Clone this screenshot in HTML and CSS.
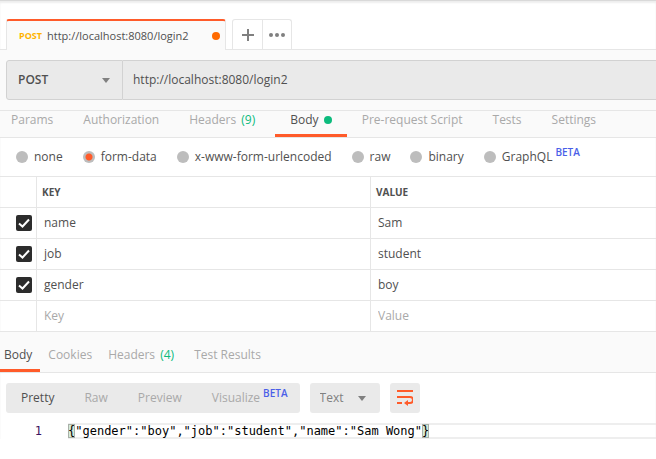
FILE: index.html
```
<!DOCTYPE html>
<html lang="en">
  <head>
    <meta charset="utf-8">
    <meta name="viewport" content="width=device-width, initial-scale=1.0">
    <title>POST login2</title>
    <link rel="stylesheet" href="styles.css">
  </head>
  <body>

    <!-- Open request tabs -->
    <header class="tab-strip">
      <button class="request-tab" type="button">
        <span class="method">POST</span>
        <span class="tab-title">http://localhost:8080/login2</span>
        <span class="unsaved"></span>
      </button>
      <div class="tab-actions">
        <button type="button" aria-label="New tab">
          <svg width="12" height="12" viewBox="0 0 12 12"><path d="M6 0v12M0 6h12" stroke="#808080" stroke-width="2"/></svg>
        </button>
        <button type="button" aria-label="More tabs">
          <svg width="16" height="4" viewBox="0 0 16 4" fill="#808080"><circle cx="2" cy="2" r="2"/><circle cx="8" cy="2" r="2"/><circle cx="14" cy="2" r="2"/></svg>
        </button>
      </div>
    </header>

    <main>
      <!-- Method and URL -->
      <div class="url-bar">
        <select class="method-select" aria-label="Method">
          <option>POST</option>
          <option>GET</option>
        </select>
        <input class="url-input" type="text" value="http://localhost:8080/login2" aria-label="Request URL">
      </div>

      <nav class="request-nav">
        <a href="#params">Params</a>
        <a href="#auth">Authorization</a>
        <a href="#headers">Headers <span class="count">(9)</span></a>
        <a href="#body" class="active">Body <span class="dot"></span></a>
        <a href="#script">Pre-request Script</a>
        <a href="#tests">Tests</a>
        <a href="#settings">Settings</a>
      </nav>

      <!-- Body type -->
      <form class="body-types">
        <label><input type="radio" name="type">none</label>
        <label><input type="radio" name="type" checked>form-data</label>
        <label><input type="radio" name="type">x-www-form-urlencoded</label>
        <label><input type="radio" name="type">raw</label>
        <label><input type="radio" name="type">binary</label>
        <label><input type="radio" name="type">GraphQL<span class="beta">BETA</span></label>
      </form>

      <table class="form-data">
        <thead>
          <tr>
            <th class="check"></th>
            <th class="key">KEY</th>
            <th>VALUE</th>
          </tr>
        </thead>
        <tbody>
          <tr>
            <td class="check"><input type="checkbox" checked aria-label="Send name"></td>
            <td>name</td>
            <td>Sam</td>
          </tr>
          <tr>
            <td class="check"><input type="checkbox" checked aria-label="Send job"></td>
            <td>job</td>
            <td>student</td>
          </tr>
          <tr>
            <td class="check"><input type="checkbox" checked aria-label="Send gender"></td>
            <td>gender</td>
            <td>boy</td>
          </tr>
          <tr>
            <td class="check"></td>
            <td><input class="cell-input" type="text" placeholder="Key" aria-label="Key"></td>
            <td><input class="cell-input" type="text" placeholder="Value" aria-label="Value"></td>
          </tr>
        </tbody>
      </table>

      <!-- Response -->
      <nav class="response-nav">
        <a href="#response-body" class="active">Body</a>
        <a href="#cookies">Cookies</a>
        <a href="#response-headers">Headers <span class="count">(4)</span></a>
        <a href="#results">Test Results</a>
      </nav>

      <section class="response">
        <div class="view-bar">
          <div class="views">
            <button type="button" class="active">Pretty</button>
            <button type="button">Raw</button>
            <button type="button">Preview</button>
            <button type="button">Visualize<span class="beta">BETA</span></button>
          </div>
          <select class="format-select" aria-label="Format">
            <option>Text</option>
            <option>JSON</option>
          </select>
          <button type="button" class="wrap-button" aria-label="Wrap lines">
            <svg width="16" height="16" viewBox="0 0 16 16" fill="none" stroke="#ff5b2a" stroke-width="2"><path d="M0 1h16M0 7h13a2.900 2.900 0 0 1 0 6H9M0 13h5"/><path d="M11 10v6L7 13z" fill="#ff5b2a" stroke="none"/></svg>
          </button>
        </div>

        <div class="code">
          <span class="line-number">1</span>
          <code class="line"><span class="bracket">{</span>"gender":"boy","job":"student","name":"Sam Wong"<span class="bracket">}</span></code>
        </div>
      </section>
    </main>

  </body>
</html>
```
FILE: styles.css
```
* {
  box-sizing: border-box;
}

body {
  margin: 0;
  font-family: "Open Sans", sans-serif;
  font-size: 12px;
  line-height: 16px;
  color: #505050;
  background-color: #fff;
  border-top: 1px solid #d9d9d9;
  box-shadow: inset 0 2px 2px #eee;
}

button, input, select {
  font: inherit;
  color: inherit;
  margin: 0;
  padding: 0;
  border: 0;
  background: none;
}

a {
  color: #a9a9a9;
  text-decoration: none;
}

/* Tabs */
.tab-strip {
  display: flex;
  align-items: flex-end;
  gap: 6px;
  padding: 18px 6px 0;
  border-bottom: 1px solid #e6e6e6;
}

.request-tab {
  display: flex;
  align-items: center;
  width: 220px;
  height: 31px;
  margin-bottom: -1px;
  padding: 0 5px 0 12px;
  font-size: 11px;
  background-color: #fafafa;
  border: 1px solid #e6e6e6;
  border-top: 2px solid #ff5b2a;
  border-bottom: 0;
  border-radius: 3px 3px 0 0;
}

.method {
  margin-right: 5px;
  font-size: 9px;
  font-weight: bold;
  color: #ffb400;
}

.unsaved {
  width: 8px;
  height: 8px;
  margin-left: auto;
  background-color: #ff6a00;
  border-radius: 50%;
}

.tab-actions {
  display: flex;
  border: 1px solid #e6e6e6;
  border-bottom: 0;
  border-radius: 3px 3px 0 0;
}

.tab-actions button {
  display: flex;
  align-items: center;
  justify-content: center;
  width: 28px;
  height: 29px;
}

.tab-actions button:first-child {
  width: 30px;
  border-right: 1px solid #e6e6e6;
}

/* URL bar */
.url-bar {
  display: flex;
  height: 60px;
  padding: 10px 0 10px 6px;
  background-color: #fafafa;
}

.method-select, .url-input {
  background-color: #eaeaea;
  border: 1px solid #d2d2d2;
}

.method-select, .format-select {
  appearance: none;
  background-image: url("data:image/svg+xml,%3Csvg xmlns='http://www.w3.org/2000/svg' width='8' height='5'%3E%3Cpath d='M0 0h8L4 5z' fill='%23808080'/%3E%3C/svg%3E");
  background-repeat: no-repeat;
  background-position: right 12px center;
}

.method-select {
  width: 117px;
  padding-left: 11px;
  font-weight: 600;
  border-radius: 3px 0 0 3px;
}

.url-input {
  flex: 1;
  min-width: 0;
  padding-left: 10px;
  border-width: 1px 0;
}

/* Request sections */
.request-nav {
  display: flex;
  padding-right: 15px;
  background-color: #fafafa;
  border-top: 1px solid #e6e6e6;
  border-bottom: 1px solid #e6e6e6;
}

.request-nav a {
  height: 26px;
  padding: 1px 15px 0;
  white-space: nowrap;
}

.request-nav a:first-child {
  padding-left: 11px;
}

.request-nav a:nth-child(3) {
  padding-right: 20px;
}

.active {
  color: #505050;
}

.request-nav a.active, .response-nav a.active {
  color: #505050;
  border-bottom: 3px solid #ff5b2a;
}

.count {
  margin-left: 2px;
  color: #0cbb7d;
}

.dot {
  display: inline-block;
  width: 8px;
  height: 8px;
  margin-left: 2px;
  background-color: #0cbb7d;
  border-radius: 50%;
}

/* Body type radios */
.body-types {
  display: flex;
  gap: 20px;
  height: 38px;
  padding: 0 16px;
}

.body-types label {
  display: flex;
  align-items: center;
  white-space: nowrap;
}

.body-types input {
  appearance: none;
  width: 12px;
  height: 12px;
  margin-right: 6px;
  background-color: #bdbdbd;
  border-radius: 50%;
}

.body-types input:checked {
  background-image: radial-gradient(circle, #ff5b2a 3px, #bdbdbd 4px);
}

.beta {
  margin-left: 3px;
  padding-bottom: 10px;
  font-size: 10px;
  font-weight: 600;
  color: #4a5fe8;
}

/* Form data */
.form-data {
  width: 100%;
  table-layout: fixed;
  border-collapse: separate;
  border-spacing: 0;
  border-top: 1px solid #e6e6e6;
}

.form-data th, .form-data td {
  height: 31px;
  padding: 0 0 0 7px;
  text-align: left;
  border-right: 1px solid #e6e6e6;
  border-bottom: 1px solid #e6e6e6;
}

.form-data th {
  padding-left: 5px;
  font-size: 10px;
}

.form-data th:last-child, .form-data td:last-child {
  border-right: 0;
}

.form-data .check {
  width: 37px;
  padding: 0 4px 0 16px;
}

.form-data .key {
  width: 334px;
}

.check input {
  appearance: none;
  display: block;
  width: 16px;
  height: 16px;
  border-radius: 2px;
}

.check input:checked {
  background: #2c2c2c url("data:image/svg+xml,%3Csvg xmlns='http://www.w3.org/2000/svg' width='16' height='16'%3E%3Cpath d='M3 8.500l3.500 3L13 4.500' fill='none' stroke='%23fff' stroke-width='2'/%3E%3C/svg%3E");
}

.cell-input {
  display: block;
  width: 100%;
}

.cell-input::placeholder {
  color: #a9a9a9;
}

/* Response */
.response-nav {
  display: flex;
  height: 41px;
  background-color: #fafafa;
  border-bottom: 1px solid #e6e6e6;
}

.response-nav a {
  padding: 15px 12px 0 8px;
  white-space: nowrap;
}

.response-nav a:first-child {
  padding: 15px 8px 0 4px;
}

.response-nav a:nth-child(2) {
  padding-right: 8px;
}

.view-bar {
  display: flex;
  gap: 10px;
  padding: 10px 6px;
}

.views {
  display: flex;
  gap: 30px;
  padding: 0 12px 0 15px;
  color: #a9a9a9;
  background-color: #eaeaea;
  border-radius: 3px;
}

.views button {
  display: flex;
  align-items: center;
  height: 30px;
}

.views .active {
  color: #505050;
}

.format-select {
  width: 70px;
  padding-left: 10px;
  color: #808080;
  background-color: #eaeaea;
  border-radius: 3px;
  background-position: right 14px center;
}

.wrap-button {
  display: flex;
  align-items: center;
  justify-content: center;
  width: 30px;
  background-color: #eaeaea;
  border-radius: 3px;
}

.code {
  display: flex;
  font-family: "DejaVu Sans Mono", monospace;
  color: #000;
}

.line-number {
  width: 68px;
  padding-right: 26px;
  text-align: right;
  color: #3c1560;
}

.code .line {
  flex: 1;
  font-family: inherit;
  white-space: pre;
  box-shadow: inset 0 2px #eee, inset 0 -2px #eee;
}

.bracket {
  background-color: #d5ead8;
  outline: 1px solid #a8b0a8;
  outline-offset: -1px;
}
```
